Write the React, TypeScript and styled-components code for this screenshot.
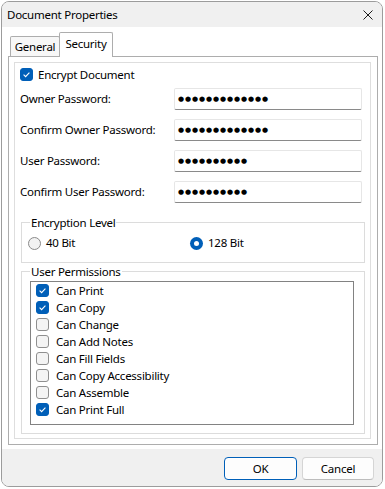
import styled, { createGlobalStyle, css } from 'styled-components';

const GlobalStyle = createGlobalStyle`
  html, body {
    margin: 0;
    padding: 0;
    background: #ffffff;
  }
  body {
    font-family: 'Noto Sans', 'Liberation Sans', sans-serif;
    font-size: 11.5px;
    letter-spacing: -0.25px;
    color: #000000;
  }
  * {
    box-sizing: border-box;
  }
`;

const accent = '#005fb8';

const Window = styled.div`
  margin: 1px 0 0 1px;
  width: 382px;
  height: 486px;
  border: 1px solid #9c9c9c;
  border-radius: 8px;
  overflow: hidden;
  display: flex;
  flex-direction: column;
  background: #ffffff;
`;

const TitleBar = styled.div`
  height: 25px;
  flex: none;
  display: flex;
  align-items: center;
  justify-content: space-between;
  padding: 0 9px 0 5px;
  background: #f0f0f0;
`;

const Title = styled.span`
  line-height: 16px;
`;

const CloseButton = styled.span`
  display: inline-flex;
  width: 10px;
  height: 10px;
`;

const Body = styled.div`
  height: 422px;
  flex: none;
  display: flex;
  flex-direction: column;
  padding: 5px 4px 4px 6px;
  background: #ffffff;
`;

const TabStrip = styled.div`
  height: 24px;
  flex: none;
  display: flex;
  align-items: flex-end;
  padding-left: 2px;
`;

const Tab = styled.div<{ $active?: boolean }>`
  display: flex;
  align-items: center;
  justify-content: center;
  border: 1px solid #adadad;
  border-bottom: none;
  border-radius: 2px 2px 0 0;
  line-height: 16px;
  ${(p) =>
    p.$active
      ? css`
          position: relative;
          z-index: 1;
          width: 54px;
          height: 25px;
          margin: 0 0 -1px -1px;
          padding-bottom: 2px;
          background: #ffffff;
        `
      : css`
          width: 50px;
          height: 20px;
          background: #f7f7f7;
        `}
`;

const TabPanel = styled.div`
  flex: 1;
  display: flex;
  flex-direction: column;
  border: 1px solid #adadad;
  padding: 5px 6px 5px 5px;
`;

const InnerPanel = styled.div`
  flex: 1;
  display: flex;
  flex-direction: column;
  border: 1px solid #dedede;
  padding: 3px 5px 4px 5px;
`;

const CheckRow = styled.label<{ $gap: number }>`
  display: flex;
  align-items: center;
  gap: ${(p) => p.$gap}px;
  height: 17px;
  line-height: 16px;
`;

const Box = styled.span<{ $checked?: boolean }>`
  width: 13px;
  height: 13px;
  flex: none;
  display: inline-flex;
  border-radius: 3px;
  ${(p) =>
    p.$checked
      ? css`
          background: ${accent};
          border: 1px solid ${accent};
        `
      : css`
          background: #f4f4f4;
          border: 1px solid #8f8f8f;
        `}
`;

const Fields = styled.div`
  margin-top: 5px;
  display: flex;
  flex-direction: column;
  gap: 9px;
  padding-right: 3px;
`;

const FieldRow = styled.div`
  display: flex;
  align-items: center;
  height: 22px;
`;

const FieldLabel = styled.span`
  width: 154px;
  flex: none;
  line-height: 16px;
`;

const PasswordBox = styled.div`
  flex: 1;
  height: 22px;
  display: flex;
  align-items: center;
  padding-left: 3px;
  border: 1px solid #e6e6e6;
  border-bottom-color: #8a8a8a;
  border-radius: 2px;
  background: #ffffff;
`;

const Dots = styled.span`
  font-family: 'DejaVu Sans', sans-serif;
  font-size: 7px;
  letter-spacing: 0.9px;
  line-height: 10px;
  color: #000000;
`;

const GroupBox = styled.div<{ $top: number }>`
  position: relative;
  margin: ${(p) => p.$top}px 0 0 1px;
  border: 1px solid #dcdcdc;
`;

const Legend = styled.span`
  position: absolute;
  top: -8px;
  left: 8px;
  padding: 0 1px;
  line-height: 16px;
  background: #ffffff;
`;

const RadioRow = styled.div`
  display: flex;
  height: 16px;
  margin: 12px 0 11px 6px;
`;

const RadioItem = styled.label<{ $width?: number }>`
  display: flex;
  align-items: center;
  gap: 5px;
  line-height: 16px;
  ${(p) => p.$width && `width: ${p.$width}px;`}
`;

const RadioDot = styled.span<{ $checked?: boolean }>`
  width: 13px;
  height: 13px;
  flex: none;
  border-radius: 50%;
  display: inline-flex;
  align-items: center;
  justify-content: center;
  ${(p) =>
    p.$checked
      ? css`
          background: ${accent};
          &::after {
            content: '';
            width: 5px;
            height: 5px;
            border-radius: 50%;
            background: #ffffff;
          }
        `
      : css`
          background: #f2f2f2;
          border: 1px solid #8a8a8a;
        `}
`;

const ListBox = styled.div`
  height: 144px;
  margin: 9px 10px 8px 8px;
  border: 1px solid #828282;
  padding: 0 0 0 5px;
  display: flex;
  flex-direction: column;
`;

const Footer = styled.div`
  flex: 1;
  display: flex;
  justify-content: flex-end;
  align-items: flex-start;
  gap: 5px;
  padding: 8px 8px 0 0;
  background: #f0f0f0;
`;

const Button = styled.button<{ $primary?: boolean; $width: number }>`
  width: ${(p) => p.$width}px;
  height: 23px;
  padding: 0;
  font: inherit;
  letter-spacing: inherit;
  line-height: 16px;
  color: #000000;
  border-radius: 4px;
  background: #fdfdfd;
  ${(p) =>
    p.$primary
      ? css`
          border: 1px solid ${accent};
          box-shadow: inset 0 0 0 1px #ffffff;
        `
      : css`
          border: 1px solid #d5d5d5;
          border-bottom-color: #bdbdbd;
        `}
`;

function Check({ checked }: { checked?: boolean }) {
  return (
    <Box $checked={checked}>
      {checked && (
        <svg width="11" height="11" viewBox="0 0 11 11">
          <polyline points="2.6,5.6 4.6,7.6 8.4,3.6" fill="none" stroke="#ffffff" strokeWidth="1.1" />
        </svg>
      )}
    </Box>
  );
}

const fields = [
  { label: 'Owner Password:', length: 13 },
  { label: 'Confirm Owner Password:', length: 13 },
  { label: 'User Password:', length: 10 },
  { label: 'Confirm User Password:', length: 10 },
];

const permissions = [
  { label: 'Can Print', checked: true },
  { label: 'Can Copy', checked: true },
  { label: 'Can Change', checked: false },
  { label: 'Can Add Notes', checked: false },
  { label: 'Can Fill Fields', checked: false },
  { label: 'Can Copy Accessibility', checked: false },
  { label: 'Can Assemble', checked: false },
  { label: 'Can Print Full', checked: true },
];

export default function App() {
  return (
    <>
      <GlobalStyle />
      <Window>
        <TitleBar>
          <Title>Document Properties</Title>
          <CloseButton>
            <svg width="10" height="10" viewBox="0 0 10 10">
              <path d="M0.5 0.5 L9.5 9.5 M9.5 0.5 L0.5 9.5" stroke="#1b1b1b" strokeWidth="1" />
            </svg>
          </CloseButton>
        </TitleBar>
        <Body>
          <TabStrip>
            <Tab>General</Tab>
            <Tab $active>Security</Tab>
          </TabStrip>
          <TabPanel>
            <InnerPanel>
              <CheckRow $gap={5}>
                <Check checked />
                Encrypt Document
              </CheckRow>
              <Fields>
                {fields.map((f) => (
                  <FieldRow key={f.label}>
                    <FieldLabel>{f.label}</FieldLabel>
                    <PasswordBox>
                      <Dots>{'●'.repeat(f.length)}</Dots>
                    </PasswordBox>
                  </FieldRow>
                ))}
              </Fields>
              <GroupBox $top={19}>
                <Legend>Encryption Level</Legend>
                <RadioRow>
                  <RadioItem $width={162}>
                    <RadioDot />
                    40 Bit
                  </RadioItem>
                  <RadioItem>
                    <RadioDot $checked />
                    128 Bit
                  </RadioItem>
                </RadioRow>
              </GroupBox>
              <GroupBox $top={8}>
                <Legend>User Permissions</Legend>
                <ListBox>
                  {permissions.map((p) => (
                    <CheckRow key={p.label} $gap={7}>
                      <Check checked={p.checked} />
                      {p.label}
                    </CheckRow>
                  ))}
                </ListBox>
              </GroupBox>
            </InnerPanel>
          </TabPanel>
        </Body>
        <Footer>
          <Button $primary $width={73}>
            OK
          </Button>
          <Button $width={72}>Cancel</Button>
        </Footer>
      </Window>
    </>
  );
}
